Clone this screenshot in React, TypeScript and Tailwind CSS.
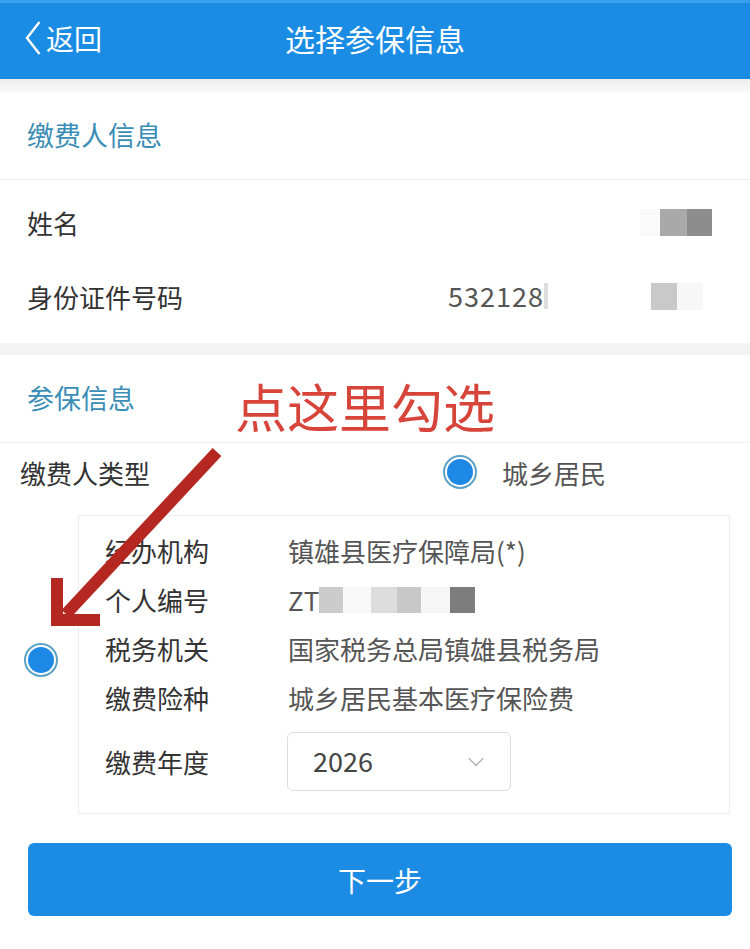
import { ChevronDown } from 'lucide-react'

const font = { fontFamily: '"Noto Sans CJK SC", "Noto Sans", sans-serif' }

const details = [
  { label: '经办机构', value: '镇雄县医疗保障局(*)' },
  { label: '个人编号', value: 'ZT', masked: true },
  { label: '税务机关', value: '国家税务总局镇雄县税务局' },
  { label: '缴费险种', value: '城乡居民基本医疗保险费' },
]

function Radio() {
  return (
    <div className="w-[34px] h-[34px] rounded-full border-2 border-[#5aa3c4] p-[2px] bg-white shrink-0">
      <div className="w-full h-full rounded-full bg-[#1e88e5]" />
    </div>
  )
}

export default function App() {
  return (
    <div className="relative w-[750px] h-[949px] bg-white overflow-hidden text-[#333]" style={font}>
      {/* header */}
      <div className="h-[79px] bg-[#1a8ce4] border-t-[3px] border-[#3aa0ee] flex items-center relative">
        <div className="flex items-center pl-[25px] text-white text-[28px] leading-none -mt-[6px]">
          <svg width="16" height="34" viewBox="0 0 16 34" className="mr-[5px]">
            <polyline points="14.5,1 2,17 14.5,33" fill="none" stroke="white" strokeWidth="2.4" />
          </svg>
          <span>返回</span>
        </div>
        <div className="absolute left-0 right-0 text-center text-white text-[30px] leading-none top-[20px]">选择参保信息</div>
      </div>
      <div className="h-[13px] bg-gradient-to-b from-[#ececec] to-[#fafafa]" />

      {/* 缴费人信息 */}
      <div className="h-[88px] flex items-center px-[27px] text-[27px] text-[#3a8db5] border-b border-[#eeeeee]">缴费人信息</div>
      <div className="pt-[5px] pb-[10px]">
        <div className="h-[74px] flex items-center justify-between px-[27px] text-[26px]">
          <span>姓名</span>
          <div className="flex mr-[11px]">
            <div className="w-[20px] h-[27px] bg-[#fafafa]" />
            <div className="w-[27px] h-[27px] bg-[#a9a9a9]" />
            <div className="w-[25px] h-[27px] bg-[#8d8d8d]" />
          </div>
        </div>
        <div className="h-[74px] flex items-center px-[27px] text-[26px]">
          <span className="w-[421px]">身份证件号码</span>
          <span className="text-[27px] text-[#555] tracking-[1px]">532128</span>
          <div className="w-[4px] h-[26px] bg-[#dddddd]" />
          <div className="ml-[103px] flex">
            <div className="w-[26px] h-[27px] bg-[#c9c9c9]" />
            <div className="w-[26px] h-[27px] bg-[#f7f7f7]" />
          </div>
        </div>
      </div>
      <div className="h-[12px] bg-[#f3f3f3]" />

      {/* 参保信息 */}
      <div className="h-[88px] flex items-center px-[27px] text-[27px] text-[#3a8db5] border-b border-[#eeeeee]">参保信息</div>
      <div className="h-[58px] flex items-center pl-[20px] text-[26px]">
        <span className="w-[423px]">缴费人类型</span>
        <Radio />
        <span className="ml-[25px] text-[#555]">城乡居民</span>
      </div>

      <div className="flex items-center mt-[14px] pl-[24px] pr-[20px]">
        <div className="mb-[10px]">
          <Radio />
        </div>
        <div className="ml-[20px] flex-1 border border-[#eeeeee] pl-[26px] pt-[10px] pb-[22px] text-[26px]">
          {details.map((d) => (
            <div key={d.label} className="h-[49px] flex items-center">
              <span className="w-[183px]">{d.label}</span>
              <span className="text-[#555]">{d.value}</span>
              {d.masked && (
                <div className="flex items-center">
                  <div className="w-[24px] h-[26px] bg-[#cccccc]" />
                  <div className="w-[28px] h-[26px] bg-[#f9f9f9]" />
                  <div className="w-[26px] h-[26px] bg-[#dddddd]" />
                  <div className="w-[24px] h-[26px] bg-[#c8c8c8]" />
                  <div className="w-[29px] h-[26px] bg-[#f6f6f6]" />
                  <div className="w-[25px] h-[26px] bg-[#7d7d7d]" />
                </div>
              )}
            </div>
          ))}
          <div className="flex items-center mt-[10px]">
            <span className="w-[182px]">缴费年度</span>
            <div className="w-[224px] h-[59px] border border-[#dddddd] rounded-[6px] flex items-center justify-between pl-[25px] pr-[20px]">
              <span className="text-[27px] text-[#444]">2026</span>
              <ChevronDown size={28} strokeWidth={1} className="text-[#aaaaaa]" />
            </div>
          </div>
        </div>
      </div>

      <div className="px-[28px] mt-[29px] pr-[18px]">
        <button className="w-full h-[73px] rounded-[6px] bg-[#1b8be3] text-white text-[28px]">下一步</button>
      </div>

      {/* annotation */}
      <div className="absolute left-[235px] top-[380px] text-[52px] leading-none text-[#d7443a]">点这里勾选</div>
      <svg className="absolute left-0 top-0 pointer-events-none" width="750" height="949">
        <path d="M217 452 L66 614" stroke="#b52822" strokeWidth="12" fill="none" />
        <path d="M57 578 L57 620 L100 620" stroke="#b52822" strokeWidth="12" fill="none" strokeLinejoin="miter" />
      </svg>
    </div>
  )
}
